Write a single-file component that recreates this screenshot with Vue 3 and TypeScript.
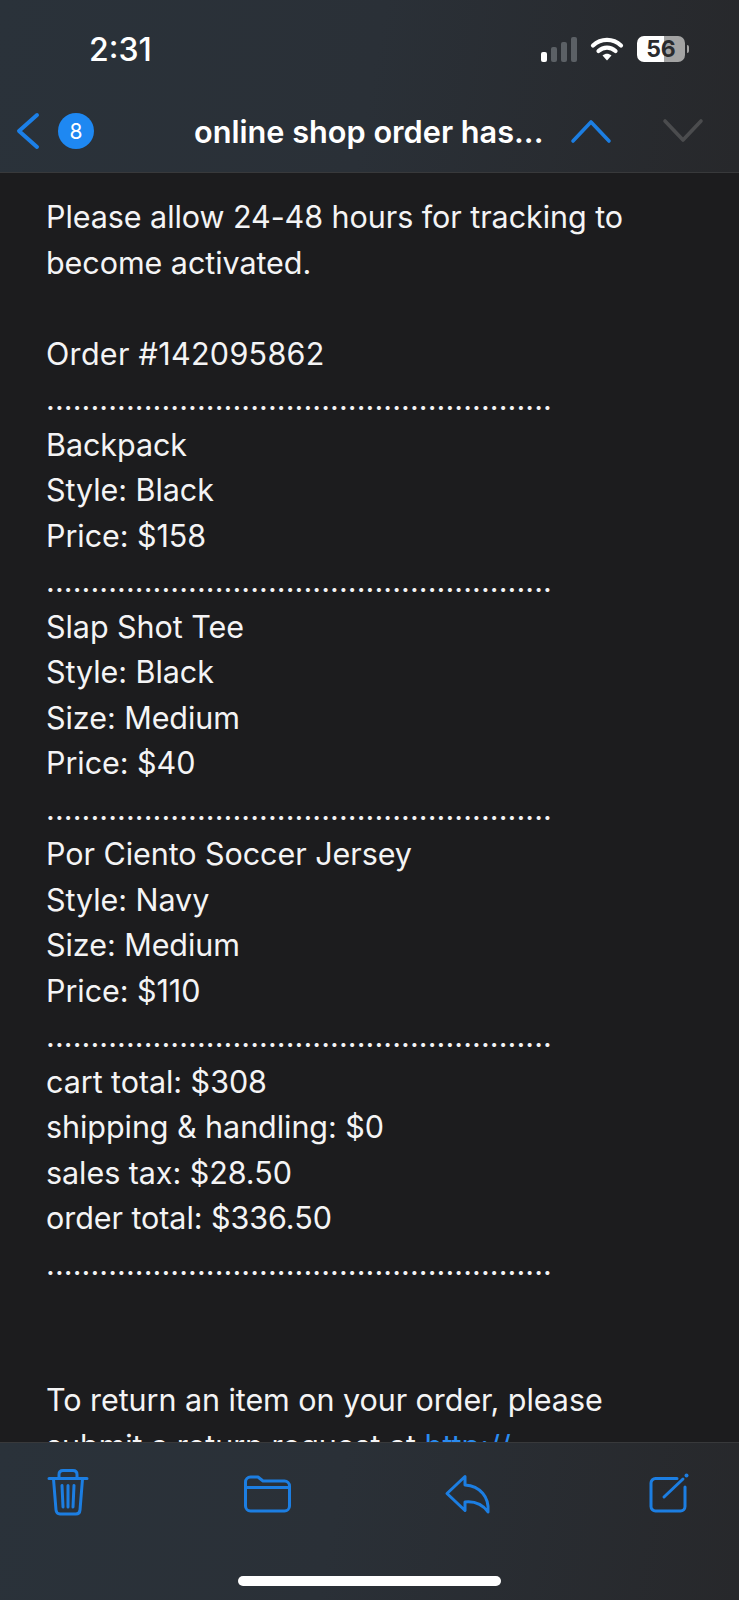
<script setup lang="ts">
const dots = ".".repeat(57);

const lines: string[] = [
  "Please allow 24-48 hours for tracking to",
  "become activated.",
  "",
  "Order #142095862",
  dots,
  "Backpack",
  "Style: Black",
  "Price: $158",
  dots,
  "Slap Shot Tee",
  "Style: Black",
  "Size: Medium",
  "Price: $40",
  dots,
  "Por Ciento Soccer Jersey",
  "Style: Navy",
  "Size: Medium",
  "Price: $110",
  dots,
  "cart total: $308",
  "shipping & handling: $0",
  "sales tax: $28.50",
  "order total: $336.50",
  dots,
  "",
  "",
  "To return an item on your order, please",
];
</script>

<template>
  <div class="phone">
    <header class="top">
      <div class="status">
        <span class="time">2:31</span>
        <div class="status-icons">
          <div class="signal">
            <i class="on b1"></i>
            <i class="b2"></i>
            <i class="b3"></i>
            <i class="b4"></i>
          </div>
          <svg class="wifi" width="34" height="26" viewBox="0 0 34 26">
            <path d="M3 9.5C11 2 23 2 31 9.5" fill="none" stroke="#fff" stroke-width="4.2" stroke-linecap="round" />
            <path d="M8.5 15C13.5 10.5 20.5 10.5 25.5 15" fill="none" stroke="#fff" stroke-width="4.2" stroke-linecap="round" />
            <path d="M12.5 19.5C15.5 17 18.5 17 21.5 19.5L17 24.5Z" fill="#fff" />
          </svg>
          <div class="battery">
            <div class="battery-body"><span>56</span></div>
            <i class="battery-tip"></i>
          </div>
        </div>
      </div>
      <nav class="nav">
        <svg class="back" width="26" height="38" viewBox="0 0 26 38">
          <path d="M21 3L3 19L21 35" fill="none" stroke="#1c80e8" stroke-width="4" stroke-linecap="round" stroke-linejoin="round" />
        </svg>
        <span class="badge">8</span>
        <span class="title">online shop order has...</span>
        <svg class="arrow up" width="44" height="26" viewBox="0 0 44 26">
          <path d="M4 23L22 4L40 23" fill="none" stroke="#1c7ee2" stroke-width="3.6" stroke-linecap="round" stroke-linejoin="round" />
        </svg>
        <svg class="arrow" width="44" height="26" viewBox="0 0 44 26">
          <path d="M4 3L22 22L40 3" fill="none" stroke="#4b4c4e" stroke-width="3.6" stroke-linecap="round" stroke-linejoin="round" />
        </svg>
      </nav>
    </header>

    <main class="mail">
      <div
        v-for="(line, i) in lines"
        :key="i"
        class="line"
        :class="{ dots: line === dots, order: line.startsWith('Order') }"
      >{{ line || "\u00a0" }}</div>
      <div class="line">submit a return request at <a class="link">http://</a></div>
    </main>

    <footer class="bottom">
      <div class="tools">
        <svg width="50" height="50" viewBox="0 0 50 50" fill="none">
          <path d="M6 11.5H44M16 11V7.5C16 4.8 17.6 3.5 20 3.5H30C32.4 3.5 34 4.8 34 7.5V11M10.5 12L13 43C13.300 46 14.800 47 17 47H33C35.200 47 36.700 46 37 43L39.500 12M19 18.500L20 40M25 18.500V40M31 18.500L30 40" stroke="#1c7ee2" stroke-width="3" stroke-linecap="round" stroke-linejoin="round" />
        </svg>
        <svg width="50" height="50" viewBox="1.5 0 50 50" fill="none">
          <path d="M3 15A5 5 0 0 1 8 10H15.500L20.500 14H42A5 5 0 0 1 47 19V39A5 5 0 0 1 42 44H8A5 5 0 0 1 3 39ZM3 20.500H47" stroke="#1c7ee2" stroke-width="3" stroke-linejoin="round" />
        </svg>
        <svg width="50" height="50" viewBox="2 0 50 50" fill="none">
          <path d="M23 9.500L5 26.500L23 43.500V35C33 34 41 38 46 45C47.500 30 38 19 23 18Z" stroke="#1c7ee2" stroke-width="3" stroke-linejoin="round" />
        </svg>
        <svg width="50" height="50" viewBox="0 0 50 50" fill="none">
          <path d="M32 11.500H10.500A4.500 4.500 0 0 0 6 16V39.500A4.500 4.500 0 0 0 10.500 44H35.500A4.500 4.500 0 0 0 40 39.500V20" stroke="#1c7ee2" stroke-width="3" stroke-linecap="round" />
          <path d="M19 30L38 12" stroke="#1c7ee2" stroke-width="3" stroke-linecap="round" />
          <circle cx="41.500" cy="8.500" r="2" fill="#1c7ee2" />
        </svg>
      </div>
      <div class="home"></div>
    </footer>
  </div>
</template>

<style>
html,
body {
  margin: 0;
  background: #1c1c1e;
}
</style>

<style scoped>
.phone {
  width: 739px;
  height: 1600px;
  display: flex;
  flex-direction: column;
  overflow: hidden;
  background: #1c1c1e;
  color: #fff;
  font-family: Inter, "Liberation Sans", sans-serif;
}

.top {
  height: 173px;
  flex-shrink: 0;
  box-sizing: border-box;
  border-bottom: 1px solid #38393b;
  background: linear-gradient(100deg, #2a323a 0%, #2a3037 50%, #27282b 100%);
}

.status {
  height: 98px;
  display: flex;
  justify-content: space-between;
  align-items: center;
  padding: 0 50px 0 89px;
}

.time {
  font-size: 32px;
  font-weight: 500;
}

.status-icons {
  display: flex;
  align-items: center;
  gap: 13px;
}

.signal {
  display: flex;
  align-items: flex-end;
  gap: 4px;
  height: 25px;
}

.signal i {
  width: 6px;
  border-radius: 2px;
  background: #5b6065;
}

.signal .on {
  background: #fff;
}

.b1 {
  height: 10px;
}

.b2 {
  height: 15px;
}

.b3 {
  height: 20px;
}

.b4 {
  height: 25px;
}

.battery {
  display: flex;
  align-items: center;
  gap: 2px;
}

.battery-body {
  width: 48px;
  height: 26px;
  border-radius: 7px;
  display: flex;
  align-items: center;
  justify-content: center;
  background: linear-gradient(90deg, #fff 0 56%, #a3a3a3 56% 100%);
  color: #2a2b2e;
  font-size: 23px;
  font-weight: 700;
}

.battery-tip {
  width: 2px;
  height: 8px;
  border-radius: 0 2px 2px 0;
  background: #a3a3a3;
}

.nav {
  height: 66px;
  display: flex;
  align-items: center;
  padding-left: 16px;
}

.back {
  margin-right: 16px;
}

.badge {
  width: 36px;
  height: 36px;
  border-radius: 50%;
  background: #1e88f2;
  display: flex;
  align-items: center;
  justify-content: center;
  font-size: 21px;
}

.title {
  margin-left: 100px;
  font-size: 30.7px;
  font-weight: 600;
  white-space: nowrap;
}

.arrow {
  flex-shrink: 0;
}

.up {
  margin-left: 26px;
  margin-right: 48px;
}

.mail {
  flex: 1;
  min-height: 0;
  overflow: hidden;
  box-sizing: border-box;
  padding: 21px 0 0 46px;
  font-size: 30.5px;
  line-height: 45.5px;
  letter-spacing: -0.06px;
  color: #f4f4f5;
}

.line {
  white-space: nowrap;
}

.dots {
  letter-spacing: 0.09px;
}

.order {
  letter-spacing: 0.3px;
}

.link {
  color: #2a8bf0;
}

.bottom {
  height: 158px;
  flex-shrink: 0;
  box-sizing: border-box;
  border-top: 1px solid #38393b;
  background: linear-gradient(100deg, #2a323a 0%, #2a3037 45%, #27282b 100%);
  display: flex;
  flex-direction: column;
  align-items: center;
}

.tools {
  align-self: stretch;
  display: flex;
  justify-content: space-between;
  padding: 24px 44px 0 43px;
}

.home {
  width: 263px;
  height: 10px;
  border-radius: 5px;
  background: #fff;
  margin-top: 59px;
}
</style>
